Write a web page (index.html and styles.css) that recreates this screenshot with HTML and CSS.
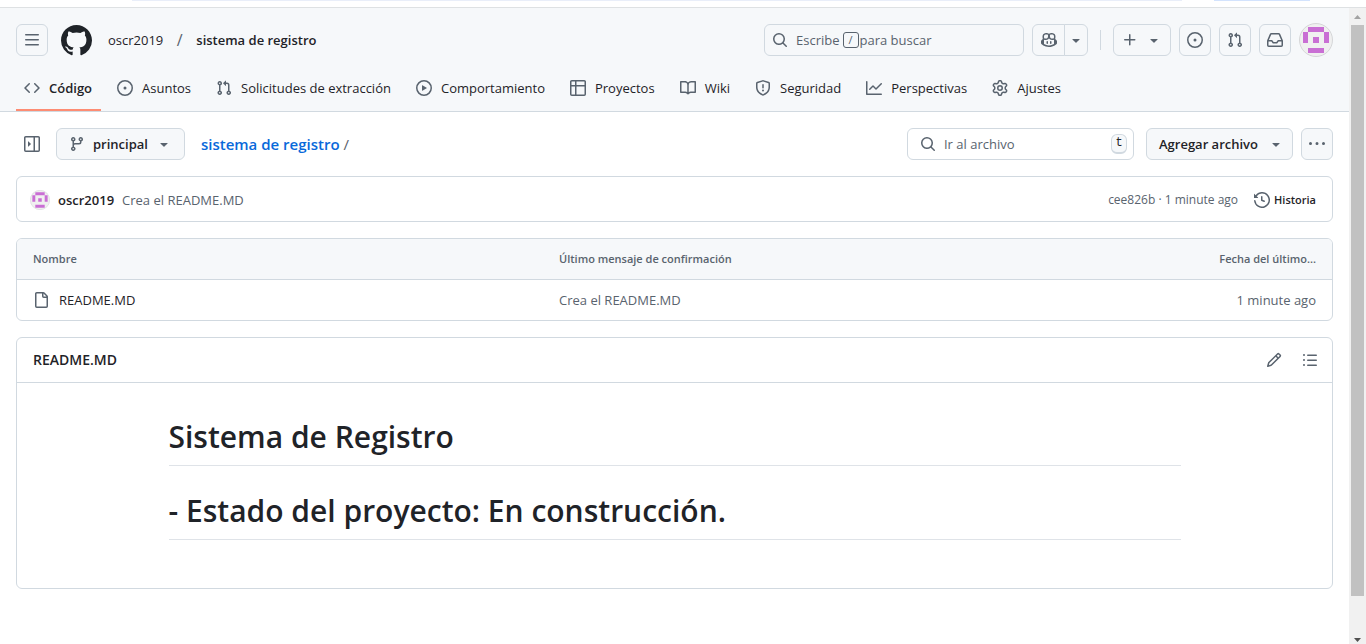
FILE: index.html
```html
<!DOCTYPE html>
<html lang="es">
<head>
<meta charset="utf-8">
<meta name="viewport" content="width=device-width, initial-scale=1">
<title>sistema de registro</title>
<link rel="stylesheet" href="styles.css">
</head>
<body>
<svg class="sprite" aria-hidden="true">
  <symbol id="i-menu" viewBox="0 0 16 16"><path d="M1 2.75A.75.75 0 0 1 1.75 2h12.5a.75.75 0 0 1 0 1.5H1.75A.75.75 0 0 1 1 2.75Zm0 5A.75.75 0 0 1 1.75 7h12.5a.75.75 0 0 1 0 1.500H1.750A.75.75 0 0 1 1 7.750ZM1.750 12h12.500a.75.75 0 0 1 0 1.500H1.750a.75.75 0 0 1 0-1.500Z"/></symbol>
  <symbol id="i-mark" viewBox="0 0 16 16"><path d="M8 0c4.420 0 8 3.580 8 8a8.013 8.013 0 0 1-5.450 7.590c-.4.080-.550-.170-.550-.380 0-.270.010-1.130.010-2.200 0-.750-.250-1.230-.540-1.480 1.780-.2 3.650-.880 3.650-3.950 0-.880-.310-1.590-.820-2.150.080-.2.360-1.020-.080-2.120 0 0-.670-.220-2.200.820-.640-.180-1.320-.270-2-.270-.680 0-1.360.090-2 .270-1.530-1.030-2.200-.820-2.200-.820-.440 1.100-.160 1.920-.080 2.120-.510.560-.820 1.280-.820 2.150 0 3.060 1.860 3.750 3.640 3.950-.230.200-.440.550-.510 1.070-.460.210-1.610.550-2.330-.660-.150-.240-.6-.830-1.230-.820-.670.010-.270.380.010.530.340.190.730.900.820 1.130.160.450.680 1.310 2.690.940 0 .670.010 1.300.010 1.490 0 .210-.150.450-.550.380A7.995 7.995 0 0 1 0 8c0-4.420 3.580-8 8-8Z"/></symbol>
  <symbol id="i-code" viewBox="0 0 16 16"><path d="m11.280 3.220 4.250 4.250a.75.75 0 0 1 0 1.060l-4.250 4.250a.749.749 0 0 1-1.275-.326.749.749 0 0 1 .215-.734L13.940 8l-3.720-3.720a.749.749 0 0 1 .326-1.275.749.749 0 0 1 .734.215Zm-6.560 0a.751.751 0 0 1 1.042.018.751.751 0 0 1 .018 1.042L2.060 8l3.720 3.720a.749.749 0 0 1-.326 1.275.749.749 0 0 1-.734-.215L.470 8.530a.75.75 0 0 1 0-1.060Z"/></symbol>
  <symbol id="i-issue" viewBox="0 0 16 16"><path d="M8 9.500a1.500 1.500 0 1 0 0-3 1.500 1.500 0 0 0 0 3Z"/><path d="M8 0a8 8 0 1 1 0 16A8 8 0 0 1 8 0ZM1.500 8a6.500 6.500 0 1 0 13 0 6.500 6.500 0 0 0-13 0Z"/></symbol>
  <symbol id="i-pr" viewBox="0 0 16 16"><path d="M1.500 3.250a2.250 2.250 0 1 1 3 2.122v5.256a2.251 2.251 0 1 1-1.500 0V5.372A2.250 2.250 0 0 1 1.500 3.250Zm5.677-.177L9.573.677A.25.25 0 0 1 10 .854V2.500h1A2.500 2.500 0 0 1 13.500 5v5.628a2.251 2.251 0 1 1-1.500 0V5a1 1 0 0 0-1-1h-1v1.646a.25.25 0 0 1-.427.177L7.177 3.427a.25.25 0 0 1 0-.354ZM3.750 2.500a.75.75 0 1 0 0 1.500.75.75 0 0 0 0-1.500Zm0 9.500a.75.75 0 1 0 0 1.500.75.75 0 0 0 0-1.500Zm8.250.750a.75.75 0 1 0 1.500 0 .75.75 0 0 0-1.500 0Z"/></symbol>
  <symbol id="i-play" viewBox="0 0 16 16"><path d="M8 0a8 8 0 1 1 0 16A8 8 0 0 1 8 0ZM1.500 8a6.500 6.500 0 1 0 13 0 6.500 6.500 0 0 0-13 0Zm4.879-2.773 4.264 2.559a.25.25 0 0 1 0 .428l-4.264 2.559A.25.25 0 0 1 6 10.559V5.442a.25.25 0 0 1 .379-.215Z"/></symbol>
  <symbol id="i-table" viewBox="0 0 16 16"><path d="M0 1.750C0 .784.784 0 1.750 0h12.500C15.216 0 16 .784 16 1.750v12.500A1.750 1.750 0 0 1 14.250 16H1.750A1.750 1.750 0 0 1 0 14.250ZM6.500 6.500v8h7.750a.25.25 0 0 0 .25-.25V6.500Zm8-1.500V1.750a.25.25 0 0 0-.25-.25H6.500V5Zm-13 1.500v7.750c0 .138.112.25.25.25H5v-8ZM5 5V1.500H1.750a.25.25 0 0 0-.25.25V5Z"/></symbol>
  <symbol id="i-book" viewBox="0 0 16 16"><path d="M0 1.750A.75.75 0 0 1 .75 1h4.253c1.227 0 2.317.590 3 1.501A3.743 3.743 0 0 1 11.006 1h4.245a.75.75 0 0 1 .75.75v10.500a.75.75 0 0 1-.75.75h-4.507a2.250 2.250 0 0 0-1.591.659l-.622.621a.75.75 0 0 1-1.060 0l-.622-.621A2.250 2.250 0 0 0 5.258 13H.75a.75.75 0 0 1-.75-.75Zm7.251 10.324.004-5.073-.002-2.253A2.250 2.250 0 0 0 5.003 2.500H1.500v9h3.757a3.750 3.750 0 0 1 1.994.574ZM8.755 4.750l-.004 7.322a3.752 3.752 0 0 1 1.992-.572H14.500v-9h-3.495a2.250 2.250 0 0 0-2.250 2.250Z"/></symbol>
  <symbol id="i-shield" viewBox="0 0 16 16"><path d="M7.467.133a1.748 1.748 0 0 1 1.066 0l5.250 1.680A1.750 1.750 0 0 1 15 3.480V7c0 1.566-.320 3.182-1.303 4.682-.983 1.498-2.585 2.813-5.032 3.855a1.697 1.697 0 0 1-1.330 0c-2.447-1.042-4.049-2.357-5.032-3.855C1.320 10.182 1 8.566 1 7V3.480a1.755 1.755 0 0 1 1.217-1.667Zm.610 1.429a.25.25 0 0 0-.153 0l-5.250 1.680a.25.25 0 0 0-.174.238V7c0 1.358.275 2.666 1.057 3.860.784 1.194 2.121 2.340 4.366 3.297a.196.196 0 0 0 .154 0c2.245-.956 3.582-2.104 4.366-3.298C13.225 9.666 13.500 8.360 13.500 7V3.480a.251.251 0 0 0-.174-.237ZM8.750 4.750v3a.75.75 0 0 1-1.500 0v-3a.75.75 0 0 1 1.500 0ZM9 10.500a1 1 0 1 1-2 0 1 1 0 0 1 2 0Z"/></symbol>
  <symbol id="i-graph" viewBox="0 0 16 16"><path d="M1.500 1.750V13.500h13.750a.75.75 0 0 1 0 1.500H.75a.75.75 0 0 1-.75-.75V1.750a.75.75 0 0 1 1.500 0Zm14.280 2.530-5.250 5.250a.75.75 0 0 1-1.060 0L7 7.060 4.280 9.780a.751.751 0 0 1-1.042-.018.751.751 0 0 1-.018-1.042l3.250-3.250a.75.75 0 0 1 1.060 0L10 7.940l4.720-4.720a.751.751 0 0 1 1.042.018.751.751 0 0 1 .018 1.042Z"/></symbol>
  <symbol id="i-gear" viewBox="0 0 16 16"><path d="M8 0a8.200 8.200 0 0 1 .701.031C9.444.095 9.990.645 10.160 1.290l.288 1.107c.018.066.079.158.212.224.231.114.454.243.668.386.123.082.233.090.299.071l1.103-.303c.644-.176 1.392.021 1.820.630.270.385.506.792.704 1.218.315.675.111 1.422-.364 1.891l-.814.806c-.049.048-.098.147-.088.294.016.257.016.515 0 .772-.010.147.038.246.088.294l.814.806c.475.469.679 1.216.364 1.891a7.977 7.977 0 0 1-.704 1.217c-.428.610-1.176.807-1.820.630l-1.102-.302c-.067-.019-.177-.011-.3.071a5.909 5.909 0 0 1-.668.386c-.133.066-.194.158-.211.224l-.290 1.106c-.168.646-.715 1.196-1.458 1.260a8.006 8.006 0 0 1-1.402 0c-.743-.064-1.289-.614-1.458-1.260l-.289-1.106c-.018-.066-.079-.158-.212-.224a5.738 5.738 0 0 1-.668-.386c-.123-.082-.233-.090-.299-.071l-1.103.303c-.644.176-1.392-.021-1.820-.630a8.120 8.120 0 0 1-.704-1.218c-.315-.675-.111-1.422.363-1.891l.815-.806c.050-.048.098-.147.088-.294a6.214 6.214 0 0 1 0-.772c.010-.147-.038-.246-.088-.294l-.815-.806C.635 6.045.431 5.298.746 4.623a7.920 7.920 0 0 1 .704-1.217c.428-.610 1.176-.807 1.820-.630l1.102.302c.067.019.177.011.3-.071.214-.143.437-.272.668-.386.133-.066.194-.158.211-.224l.290-1.106C6.009.645 6.556.095 7.299.030 7.530.010 7.764 0 8 0Zm-.571 1.525c-.036.003-.108.036-.137.146l-.289 1.105c-.147.561-.549.967-.998 1.189-.173.086-.340.183-.5.290-.417.278-.970.423-1.529.270l-1.103-.303c-.109-.030-.175.016-.195.045-.220.312-.412.644-.573.990-.014.031-.021.110.059.190l.815.806c.411.406.562.957.530 1.456a4.709 4.709 0 0 0 0 .582c.032.499-.119 1.050-.530 1.456l-.815.806c-.081.080-.073.159-.059.190.162.346.353.677.573.989.020.030.085.076.195.046l1.102-.303c.560-.153 1.113-.008 1.530.270.161.107.328.204.501.290.447.222.850.629.997 1.189l.289 1.105c.029.109.101.143.137.146a6.600 6.600 0 0 0 1.142 0c.036-.003.108-.036.137-.146l.289-1.105c.147-.561.549-.967.998-1.189.173-.086.340-.183.5-.290.417-.278.970-.423 1.529-.270l1.103.303c.109.029.175-.016.195-.045.220-.313.411-.644.573-.990.014-.031.021-.110-.059-.190l-.815-.806c-.411-.406-.562-.957-.530-1.456a4.709 4.709 0 0 0 0-.582c-.032-.499.119-1.050.530-1.456l.815-.806c.081-.080.073-.159.059-.190a6.464 6.464 0 0 0-.573-.989c-.020-.030-.085-.076-.195-.046l-1.102.303c-.560.153-1.113.008-1.530-.270a4.440 4.440 0 0 0-.501-.290c-.447-.222-.850-.629-.997-1.189l-.289-1.105c-.029-.110-.101-.143-.137-.146a6.600 6.600 0 0 0-1.142 0ZM11 8a3 3 0 1 1-6 0 3 3 0 0 1 6 0ZM9.500 8a1.500 1.500 0 1 0-3.001.001A1.500 1.500 0 0 0 9.500 8Z"/></symbol>
  <symbol id="i-search" viewBox="0 0 16 16"><path d="M10.680 11.740a6 6 0 0 1-7.922-8.982 6 6 0 0 1 8.982 7.922l3.040 3.040a.749.749 0 0 1-.326 1.275.749.749 0 0 1-.734-.215ZM11.500 7a4.499 4.499 0 1 0-8.997 0A4.499 4.499 0 0 0 11.500 7Z"/></symbol>
  <symbol id="i-copilot" viewBox="0 0 16 16"><path d="M7.998 15.035c-4.562 0-7.873-2.914-7.998-3.749V9.338c.085-.628.677-1.686 1.588-2.065.013-.070.024-.143.036-.218.029-.183.060-.384.126-.612-.201-.508-.254-1.084-.254-1.656 0-.870.128-1.769.693-2.484.579-.733 1.494-1.124 2.724-1.261 1.206-.134 2.262.034 2.944.765.050.053.096.108.139.165.044-.057.094-.112.143-.165.682-.731 1.738-.899 2.944-.765 1.230.137 2.145.528 2.724 1.261.566.715.693 1.614.693 2.484 0 .572-.053 1.148-.254 1.656.066.228.098.429.126.612.012.076.024.148.037.218.924.385 1.522 1.471 1.591 2.095v1.872c0 .766-3.351 3.795-8.002 3.795Zm0-1.485c2.280 0 4.584-1.110 5.002-1.433V7.862l-.023-.116c-.490.210-1.075.291-1.727.291-1.146 0-2.059-.327-2.710-.991A3.222 3.222 0 0 1 8 6.303a3.240 3.240 0 0 1-.544.743c-.650.664-1.563.991-2.710.991-.652 0-1.236-.081-1.727-.291l-.023.116v4.255c.419.323 2.722 1.433 5.002 1.433ZM6.762 2.830c-.193-.206-.637-.413-1.682-.297-1.019.113-1.479.404-1.713.7-.247.312-.369.789-.369 1.554 0 .793.129 1.171.308 1.371.162.181.519.379 1.442.379.853 0 1.339-.235 1.638-.540.315-.322.527-.827.617-1.553.117-.935-.037-1.395-.241-1.614Zm4.155-.297c-1.044-.116-1.488.091-1.681.297-.204.219-.359.679-.242 1.614.091.726.303 1.231.618 1.553.299.305.784.540 1.638.540.922 0 1.280-.198 1.442-.379.179-.2.308-.578.308-1.371 0-.765-.123-1.242-.370-1.554-.233-.296-.693-.587-1.713-.7Z"/><path d="M6.250 9.037a.75.75 0 0 1 .75.75v1.501a.75.75 0 0 1-1.500 0V9.787a.75.75 0 0 1 .75-.75Zm4.250.750v1.501a.75.75 0 0 1-1.500 0V9.787a.75.75 0 0 1 1.500 0Z"/></symbol>
  <symbol id="i-down" viewBox="0 0 16 16"><path d="m4.427 7.427 3.396 3.396a.25.25 0 0 0 .354 0l3.396-3.396A.25.25 0 0 0 11.396 7H4.604a.25.25 0 0 0-.177.427Z"/></symbol>
  <symbol id="i-plus" viewBox="0 0 16 16"><path d="M7.750 2a.75.75 0 0 1 .75.75V7h4.250a.75.75 0 0 1 0 1.500H8.500v4.250a.75.75 0 0 1-1.500 0V8.500H2.750a.75.75 0 0 1 0-1.500H7V2.750A.75.75 0 0 1 7.750 2Z"/></symbol>
  <symbol id="i-inbox" viewBox="0 0 16 16"><path d="M2.800 2.060A1.750 1.750 0 0 1 4.410 1h7.180c.7 0 1.333.417 1.610 1.060l2.740 6.395c.040.093.060.194.060.295v4.500A1.750 1.750 0 0 1 14.250 15H1.750A1.750 1.750 0 0 1 0 13.250v-4.500c0-.101.020-.202.060-.295Zm1.610.440a.25.25 0 0 0-.230.152L1.887 8H4.750a.75.75 0 0 1 .6.3L6.625 10h2.750l1.275-1.700a.75.75 0 0 1 .6-.3h2.863L11.820 2.652a.25.25 0 0 0-.230-.152Zm10.090 7h-2.875l-1.275 1.700a.75.75 0 0 1-.6.3h-3.500a.75.75 0 0 1-.6-.3L4.375 9.500H1.500v3.750c0 .138.112.25.25.25h12.500a.25.25 0 0 0 .25-.25Z"/></symbol>
  <symbol id="i-sidebar" viewBox="0 0 16 16"><path d="M4.177 7.823 6.573 5.427A.25.25 0 0 1 7 5.604v4.792a.25.25 0 0 1-.427.177L4.177 8.177a.25.25 0 0 1 0-.354Z" transform="rotate(180 5.500 8)"/><path d="M0 1.750C0 .784.784 0 1.750 0h12.500C15.216 0 16 .784 16 1.750v12.500A1.750 1.750 0 0 1 14.250 16H1.750A1.750 1.750 0 0 1 0 14.250Zm1.750-.250a.25.25 0 0 0-.25.25v12.500c0 .138.112.25.25.25H9.500v-13Zm12.500 13a.25.25 0 0 0 .25-.25V1.750a.25.25 0 0 0-.25-.25H11v13Z"/></symbol>
  <symbol id="i-branch" viewBox="0 0 16 16"><path d="M9.500 3.250a2.250 2.250 0 1 1 3 2.122V6A2.500 2.500 0 0 1 10 8.500H6a1 1 0 0 0-1 1v1.128a2.251 2.251 0 1 1-1.500 0V5.372a2.250 2.250 0 1 1 1.500 0v1.836A2.493 2.493 0 0 1 6 7h4a1 1 0 0 0 1-1v-.628A2.250 2.250 0 0 1 9.500 3.250Zm-6 0a.75.75 0 1 0 1.500 0 .75.75 0 0 0-1.500 0Zm8.250-.750a.75.75 0 1 0 0 1.500.75.75 0 0 0 0-1.500ZM4.250 12a.75.75 0 1 0 0 1.500.75.75 0 0 0 0-1.500Z"/></symbol>
  <symbol id="i-dots" viewBox="0 0 16 16"><path d="M8 9a1.500 1.500 0 1 0 0-3 1.500 1.500 0 0 0 0 3ZM1.500 9a1.500 1.500 0 1 0 0-3 1.500 1.500 0 0 0 0 3Zm13 0a1.500 1.500 0 1 0 0-3 1.500 1.500 0 0 0 0 3Z"/></symbol>
  <symbol id="i-history" viewBox="0 0 16 16"><path d="m.427 1.927 1.215 1.215a8.002 8.002 0 1 1-1.600 5.685.75.75 0 1 1 1.493-.154 6.500 6.500 0 1 0 1.180-4.458l1.358 1.358A.25.25 0 0 1 3.896 6H.25A.25.25 0 0 1 0 5.750V2.104a.25.25 0 0 1 .427-.177ZM7.750 4a.75.75 0 0 1 .75.75v2.992l2.028.812a.75.75 0 0 1-.557 1.392l-2.500-1A.751.751 0 0 1 7 8.250v-3.500A.75.75 0 0 1 7.750 4Z"/></symbol>
  <symbol id="i-file" viewBox="0 0 16 16"><path d="M2 1.750C2 .784 2.784 0 3.750 0h6.586c.464 0 .909.184 1.237.513l2.914 2.914c.329.328.513.773.513 1.237v9.586A1.750 1.750 0 0 1 13.250 16h-9.500A1.750 1.750 0 0 1 2 14.250Zm1.750-.250a.25.25 0 0 0-.25.25v12.500c0 .138.112.25.25.25h9.500a.25.25 0 0 0 .25-.25V6h-2.750A1.750 1.750 0 0 1 9 4.250V1.500Zm6.750.062V4.250c0 .138.112.25.25.25h2.688l-.011-.013-2.914-2.914-.013-.011Z"/></symbol>
  <symbol id="i-pencil" viewBox="0 0 16 16"><path d="M11.013 1.427a1.750 1.750 0 0 1 2.474 0l1.086 1.086a1.750 1.750 0 0 1 0 2.474l-8.610 8.610c-.210.210-.470.364-.756.445l-3.251.930a.75.75 0 0 1-.927-.928l.929-3.250c.081-.286.235-.547.445-.758l8.610-8.610Zm.176 4.823L9.750 4.810l-6.286 6.287a.253.253 0 0 0-.064.108l-.558 1.953 1.953-.558a.253.253 0 0 0 .108-.064Zm1.238-3.763a.25.25 0 0 0-.354 0L10.811 3.750l1.439 1.440 1.263-1.263a.25.25 0 0 0 0-.354Z"/></symbol>
  <symbol id="i-list" viewBox="0 0 16 16"><path d="M5.750 2.500h8.500a.75.75 0 0 1 0 1.500h-8.500a.75.75 0 0 1 0-1.500Zm0 5h8.500a.75.75 0 0 1 0 1.500h-8.500a.75.75 0 0 1 0-1.500Zm0 5h8.500a.75.75 0 0 1 0 1.500h-8.500a.75.75 0 0 1 0-1.500ZM2 14a1 1 0 1 1 0-2 1 1 0 0 1 0 2Zm1-6a1 1 0 1 1-2 0 1 1 0 0 1 2 0ZM2 4a1 1 0 1 1 0-2 1 1 0 0 1 0 2Z"/></symbol>
  <symbol id="i-avatar" viewBox="0 0 34 34"><circle cx="17" cy="17" r="16.500" fill="#f0f0f0" stroke="#d5d6d8"/><path fill="#c96fd4" d="M9 4h16v5H9zM4 9h5v11H4zM25 9h5v11h-5zM14 14h6v6h-6zM9 25h16v5H9z"/></symbol>
</svg>

<div class="chrome"><span class="address"></span><span class="pill"></span></div>
<div class="viewport">
  <div class="page">
    <header class="header">
      <div class="topbar">
        <button class="btn square" aria-label="Menú"><svg class="icon"><use href="#i-menu"/></svg></button>
        <a class="mark" href="#" aria-label="Inicio"><svg><use href="#i-mark"/></svg></a>
        <nav class="crumbs" aria-label="Ruta"><a href="#">oscr2019</a><span class="slash">/</span><a class="strong" href="#">sistema de registro</a></nav>
        <div class="actions">
          <button class="btn search"><svg class="icon"><use href="#i-search"/></svg><span>Escribe</span><kbd class="slash-key">/</kbd><span>para buscar</span></button>
          <div class="group">
            <button class="btn square" aria-label="Copilot"><svg class="icon"><use href="#i-copilot"/></svg></button>
            <button class="btn caret" aria-label="Más de Copilot"><svg class="icon"><use href="#i-down"/></svg></button>
          </div>
          <span class="divider"></span>
          <button class="btn create" aria-label="Crear"><svg class="icon"><use href="#i-plus"/></svg><svg class="icon"><use href="#i-down"/></svg></button>
          <button class="btn square" aria-label="Asuntos"><svg class="icon"><use href="#i-issue"/></svg></button>
          <button class="btn square" aria-label="Solicitudes"><svg class="icon"><use href="#i-pr"/></svg></button>
          <button class="btn square" aria-label="Notificaciones"><svg class="icon"><use href="#i-inbox"/></svg></button>
          <button class="profile" aria-label="Perfil"><svg><use href="#i-avatar"/></svg></button>
        </div>
      </div>
      <nav class="tabs" aria-label="Repositorio">
        <a class="tab current" href="#"><svg class="icon"><use href="#i-code"/></svg>Código</a>
        <a class="tab" href="#"><svg class="icon"><use href="#i-issue"/></svg>Asuntos</a>
        <a class="tab" href="#"><svg class="icon"><use href="#i-pr"/></svg>Solicitudes de extracción</a>
        <a class="tab" href="#"><svg class="icon"><use href="#i-play"/></svg>Comportamiento</a>
        <a class="tab" href="#"><svg class="icon"><use href="#i-table"/></svg>Proyectos</a>
        <a class="tab" href="#"><svg class="icon"><use href="#i-book"/></svg>Wiki</a>
        <a class="tab" href="#"><svg class="icon"><use href="#i-shield"/></svg>Seguridad</a>
        <a class="tab" href="#"><svg class="icon"><use href="#i-graph"/></svg>Perspectivas</a>
        <a class="tab" href="#"><svg class="icon"><use href="#i-gear"/></svg>Ajustes</a>
      </nav>
    </header>

    <main class="main">
      <div class="toolbar">
        <button class="plain" aria-label="Expandir árbol"><svg class="icon"><use href="#i-sidebar"/></svg></button>
        <button class="btn branch"><svg class="icon"><use href="#i-branch"/></svg>principal<svg class="icon"><use href="#i-down"/></svg></button>
        <div class="path"><a href="#">sistema de registro</a><span>/</span></div>
        <label class="filter"><svg class="icon"><use href="#i-search"/></svg><input type="text" placeholder="Ir al archivo" aria-label="Ir al archivo"><kbd class="key">t</kbd></label>
        <button class="btn add">Agregar archivo<svg class="icon"><use href="#i-down"/></svg></button>
        <button class="btn square" aria-label="Más opciones"><svg class="icon"><use href="#i-dots"/></svg></button>
      </div>

      <section class="box commit">
        <svg class="mini"><use href="#i-avatar"/></svg>
        <a class="author" href="#">oscr2019</a>
        <a class="message" href="#">Crea el README.MD</a>
        <span class="sha">cee826b · 1 minute ago</span>
        <a class="history" href="#"><svg class="icon"><use href="#i-history"/></svg>Historia</a>
      </section>

      <div class="box">
        <table class="files">
          <thead><tr><th class="name">Nombre</th><th>Último mensaje de confirmación</th><th class="date">Fecha del último...</th></tr></thead>
          <tbody><tr><td><a class="file" href="#"><svg class="icon"><use href="#i-file"/></svg>README.MD</a></td><td>Crea el README.MD</td><td class="date">1 minute ago</td></tr></tbody>
        </table>
      </div>

      <section class="box readme">
        <div class="readme-head">
          <h2>README.MD</h2>
          <button class="plain" aria-label="Editar"><svg class="icon"><use href="#i-pencil"/></svg></button>
          <button class="plain" aria-label="Esquema"><svg class="icon"><use href="#i-list"/></svg></button>
        </div>
        <article class="markdown">
          <h1>Sistema de Registro</h1>
          <h1>- Estado del proyecto: En construcción.</h1>
        </article>
      </section>
    </main>
  </div>
  <div class="scrollbar" aria-hidden="true"><svg viewBox="0 0 17 17"><path fill="#a3a3a3" d="M5 11h7L8.500 7z"/></svg><span class="thumb"></span><svg viewBox="0 0 17 17"><path fill="#505050" d="M5 11h7l-3.500 4z"/></svg></div>
</div>
</body>
</html>
```

FILE: styles.css
```css
* { box-sizing: border-box; }
body {
  margin: 0;
  min-height: 100vh;
  display: flex;
  flex-direction: column;
  background: #fff;
  color: #1f2328;
  font: 13px/20px "Segoe UI", "Open Sans", "Noto Sans", sans-serif;
}
a { color: inherit; text-decoration: none; }
button, input, kbd { font: inherit; color: inherit; }
h1, h2 { margin: 0; }
.sprite { position: absolute; width: 0; height: 0; }
.icon { width: 16px; height: 16px; flex: none; fill: #59636e; }

.chrome { display: flex; height: 8px; padding: 0 56px 0 132px; border-bottom: 1px solid #dee1e3; gap: 32px; }
.address, .pill { height: 1px; background: #e9eef9; }
.address { flex: 1; }
.pill { width: 96px; background: #d3e3fd; }
.viewport { flex: 1; display: flex; }
.page { flex: 1; min-width: 0; }

.header { background: #f6f8fa; border-bottom: 1px solid #d1d9e0; padding: 15px 16px 0; }
.topbar { display: flex; align-items: center; height: 34px; }
.btn {
  display: inline-flex;
  align-items: center;
  justify-content: center;
  height: 32px;
  padding: 0 12px;
  background: #f6f8fa;
  border: 1px solid #d1d9e0;
  border-radius: 6px;
  white-space: nowrap;
}
.square { width: 32px; padding: 0; }
.mark { display: flex; margin: 0 16px 0 13px; }
.mark svg { width: 31px; height: 31px; fill: #1f2328; }
.crumbs { display: flex; white-space: nowrap; }
.slash { width: 33px; text-align: center; color: #59636e; font-size: 16px; }
.strong { font-weight: 600; }
.actions { display: flex; align-items: center; gap: 8px; margin-left: auto; }
.search { width: 260px; padding: 0 8px 0 7px; justify-content: flex-start; color: #59636e; }
.search .icon { margin-right: 8px; }
.slash-key { width: 16px; height: 16px; margin: 0 1px 0 3px; border: 1px solid #59636e; border-radius: 3px; font-size: 11px; line-height: 14px; text-align: center; }
.group { display: flex; }
.group .square { width: 33px; border-radius: 6px 0 0 6px; }
.caret { width: 24px; margin-left: -1px; padding: 0; border-radius: 0 6px 6px 0; }
.divider { width: 1px; height: 20px; margin: 0 4px; background: #d1d9e0; }
.create { width: 58px; padding: 0 8px; gap: 8px; }
.profile { display: flex; padding: 0; border: 0; background: none; }
.profile svg { width: 34px; height: 34px; }

.tabs { display: flex; gap: 8px; height: 54px; padding-top: 7px; }
.tab { display: flex; align-items: center; gap: 9px; padding: 0 9px 0 8px; border-bottom: 2px solid transparent; border-top: 2px solid transparent; white-space: nowrap; }
.current { font-weight: 600; border-bottom-color: #fd8c73; }

.main { display: flex; flex-direction: column; gap: 16px; padding: 16px; }
.toolbar { display: flex; align-items: center; gap: 8px; }
.plain { display: flex; width: 32px; height: 32px; align-items: center; justify-content: center; padding: 0; border: 0; background: none; }
.branch, .add { font-weight: 600; gap: 8px; }
.add { gap: 10px; padding-right: 8px; }
.path { display: flex; gap: 4px; margin: 0 auto 0 8px; font-size: 15px; white-space: nowrap; }
.path a { color: #0969da; font-weight: 600; }
.path span { color: #59636e; }
.filter { display: flex; align-items: center; gap: 8px; width: 227px; height: 32px; margin-right: 4px; padding: 0 6px 0 12px; border: 1px solid #d1d9e0; border-radius: 6px; }
.filter input { flex: 1; min-width: 0; padding: 0; border: 0; outline: 0; background: none; }
.filter input::placeholder { color: #59636e; opacity: 1; }
.key { width: 16px; height: 20px; border: 1px solid #d1d9e0; border-bottom-width: 2px; border-radius: 6px; background: #f6f8fa; font: 12px/17px "Liberation Mono", monospace; text-align: center; }

.box { border: 1px solid #d1d9e0; border-radius: 6px; overflow: hidden; }
.commit { display: flex; align-items: center; gap: 8px; height: 46px; padding: 1px 16px 0 13px; }
.mini { width: 20px; height: 20px; }
.author { font-weight: 600; }
.message { color: #59636e; margin-right: auto; }
.sha { color: #59636e; font-size: 12px; }
.history { display: flex; align-items: center; gap: 4px; margin-left: 8px; font-size: 11px; font-weight: 600; }

.files { width: 100%; border-collapse: separate; border-spacing: 0; table-layout: fixed; }
.files th, .files td { height: 41px; padding: 0 16px; text-align: left; color: #59636e; white-space: nowrap; }
.files th { background: #f6f8fa; font-size: 11px; font-weight: 600; border-bottom: 1px solid #d1d9e0; }
.files td { height: 40px; }
.files .name { width: 40%; }
.files .date { width: 150px; text-align: right; }
.file { display: flex; align-items: center; gap: 10px; color: #1f2328; }

.readme-head { display: flex; align-items: center; gap: 4px; height: 45px; padding: 0 6px 0 16px; border-bottom: 1px solid #d1d9e0; }
.readme-head h2 { flex: 1; font-size: 14px; font-weight: 600; }
.markdown { max-width: 1076px; margin: 0 auto; padding: 33px 32px 32px; }
.markdown h1 { margin-bottom: 16px; padding-bottom: 8px; border-bottom: 1px solid #dfe3e8; font-size: 30px; line-height: 41px; font-weight: 600; }
.markdown h1 + h1 { margin-top: 24px; }

.scrollbar { display: flex; flex-direction: column; width: 17px; background: #f1f1f1; }
.scrollbar svg { width: 17px; height: 17px; }
.thumb { flex: 1; margin: 0 2px 31px; background: #c1c1c1; }
```
